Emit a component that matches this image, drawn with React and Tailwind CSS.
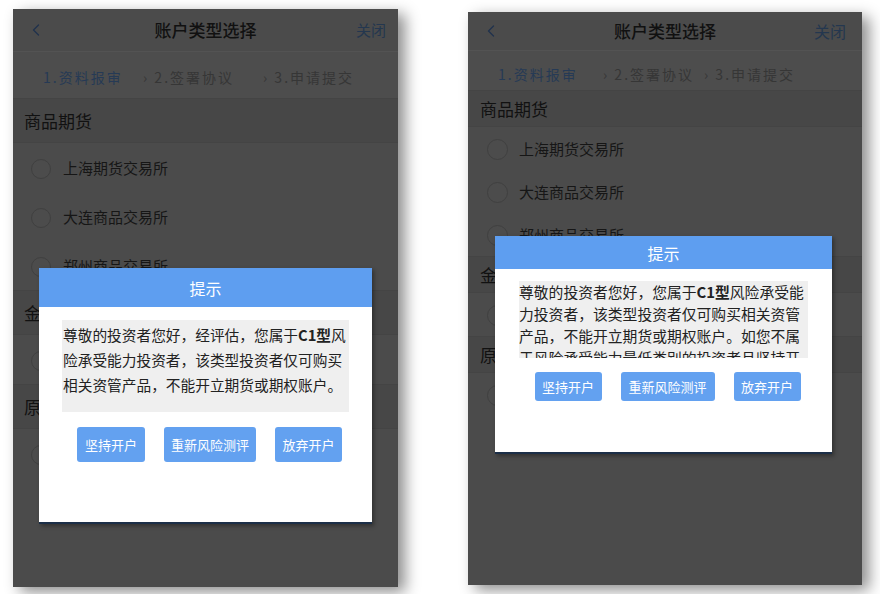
import React from 'react';
import { ChevronLeft } from 'lucide-react';

const FONT = "font-['Noto_Sans_CJK_SC','Noto_Sans',sans-serif]";

const leftCfg = {
  wrap: 'ml-[13px] mt-[9px] w-[385px] h-[578px]',
  bar: 'h-[43px]',
  title: 'text-[17px]',
  close: 'text-[15px] right-[12px]',
  back: 'left-[13px]',
  steps: 'h-[46px] pl-[30px] pt-[4px]',
  stepW: ['w-[100px]', 'w-[120px]'],
  head: 'h-[45px] pl-[11px]',
  item: 'h-[49px] pl-[18px] pt-[2px]',
  radio: 'w-[20px] h-[20px] mr-[12px]',
  dialog: 'left-[26px] top-[259px] w-[333px] h-[256px]',
  dHead: 'h-[39px] text-[16px]',
  box: 'mx-[23px] mt-[13px] h-[92px] pt-[2px] pl-[1px] leading-[25px] text-[14.7px]',
  btnRow: 'mt-[15px] gap-[19px]',
  btnH: 'h-[35px]',
  btnW: ['w-[68px]', 'w-[92px]', 'w-[67px]'],
  lines: [
    <>尊敬的投资者您好，经评估，您属于<b className="font-bold">C1型</b>风</>,
    <>险承受能力投资者，该类型投资者仅可购买</>,
    <>相关资管产品，不能开立期货或期权账户。</>,
  ],
};

const rightCfg = {
  wrap: 'ml-[70px] mt-[12px] w-[394px] h-[573px]',
  bar: 'h-[39px]',
  title: 'text-[17px]',
  close: 'text-[16px] right-[16px]',
  back: 'left-[13px]',
  steps: 'h-[39px] pl-[30px] pt-[8px]',
  stepW: ['w-[105px]', 'w-[101px]'],
  head: 'h-[37px] pl-[12px]',
  item: 'h-[43px] pl-[19px] pt-[2px]',
  radio: 'w-[21px] h-[21px] mr-[11px]',
  dialog: 'left-[27px] top-[224px] w-[337px] h-[218px]',
  dHead: 'h-[33px] text-[16px]',
  box: 'mx-[24px] mt-[12px] h-[77px] leading-[22px] text-[14.8px]',
  btnRow: 'mt-[14px] gap-[19px]',
  btnH: 'h-[29px]',
  btnW: ['w-[67px]', 'w-[94px]', 'w-[67px]'],
  lines: [
    <>尊敬的投资者您好，您属于<b className="font-bold">C1型</b>风险承受能</>,
    <>力投资者，该类型投资者仅可购买相关资管</>,
    <>产品，不能开立期货或期权账户。如您不属</>,
    <>于风险承受能力最低类别的投资者且坚持开</>,
  ],
};

function Radio({ cfg, label }) {
  return (
    <div className={`flex items-center ${cfg.item}`}>
      <span className={`rounded-full border border-[#404040] bg-[#4c4c4c] ${cfg.radio}`} />
      <span className="text-[15px] text-[#161616]">{label}</span>
    </div>
  );
}

function Section({ cfg, title }) {
  return (
    <div className={`flex items-center bg-[#474747] border-y border-[#444] text-[17px] text-[#111] ${cfg.head}`}>
      {title}
    </div>
  );
}

function Phone({ cfg }) {
  return (
    <div className={`relative shrink-0 bg-[#4b4b4b] shadow-[7px_5px_14px_rgba(0,0,0,0.45)] ${cfg.wrap}`}>
      <div className="h-full overflow-hidden">
        <div className={`relative flex items-center justify-center border-b border-[#535353] ${cfg.bar}`}>
          <ChevronLeft size={20} strokeWidth={1.6} className={`absolute text-[#20324d] ${cfg.back}`} />
          <span className={`font-medium text-[#111] ${cfg.title}`}>账户类型选择</span>
          <span className={`absolute text-[#24374f] ${cfg.close}`}>关闭</span>
        </div>
        <div className={`flex items-center bg-[#4d4d4d] text-[14px] tracking-[2px] text-[#363636] ${cfg.steps}`}>
          <span className={`text-[#263a55] ${cfg.stepW[0]}`}>1.资料报审</span>
          <span className={cfg.stepW[1]}>› 2.签署协议</span>
          <span>› 3.申请提交</span>
        </div>
        <Section cfg={cfg} title="商品期货" />
        <Radio cfg={cfg} label="上海期货交易所" />
        <Radio cfg={cfg} label="大连商品交易所" />
        <Radio cfg={cfg} label="郑州商品交易所" />
        <Section cfg={cfg} title="金融期货" />
        <Radio cfg={cfg} label="中国金融期货交易所" />
        <Section cfg={cfg} title="原油期货" />
        <Radio cfg={cfg} label="上海国际能源交易中心" />
      </div>

      <div className={`absolute flex flex-col bg-white border-b-2 border-[#1c2f48] shadow-[2px_2px_4px_rgba(0,0,0,0.35)] ${cfg.dialog}`}>
        <div className={`flex items-center justify-center bg-[#5e9ef0] text-white ${cfg.dHead}`}>提示</div>
        <div className={`overflow-hidden bg-[#efefef] text-[#222] ${cfg.box}`}>
          {cfg.lines.map((l, i) => (
            <div key={i} className="whitespace-nowrap">{l}</div>
          ))}
        </div>
        <div className={`flex justify-center pl-[8px] ${cfg.btnRow}`}>
          {['坚持开户', '重新风险测评', '放弃开户'].map((t, i) => (
            <button
              key={t}
              className={`flex items-center justify-center rounded-[3px] bg-[#63a1f0] text-[13px] text-white ${cfg.btnH} ${cfg.btnW[i]}`}
            >
              {t}
            </button>
          ))}
        </div>
      </div>
    </div>
  );
}

export default function App() {
  return (
    <div className={`flex items-start w-[880px] h-[594px] bg-white overflow-hidden ${FONT}`}>
      <Phone cfg={leftCfg} />
      <Phone cfg={rightCfg} />
    </div>
  );
}
